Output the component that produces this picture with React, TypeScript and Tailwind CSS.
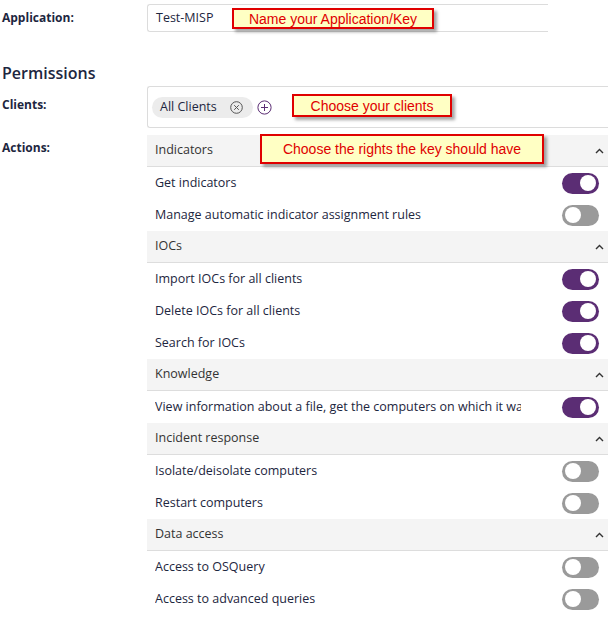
import React from 'react';

type Perm = { label: string; on: boolean };
type Group = { title: string; items: Perm[] };

const groups: Group[] = [
  {
    title: 'Indicators',
    items: [
      { label: 'Get indicators', on: true },
      { label: 'Manage automatic indicator assignment rules', on: false },
    ],
  },
  {
    title: 'IOCs',
    items: [
      { label: 'Import IOCs for all clients', on: true },
      { label: 'Delete IOCs for all clients', on: true },
      { label: 'Search for IOCs', on: true },
    ],
  },
  {
    title: 'Knowledge',
    items: [
      { label: 'View information about a file, get the computers on which it was seen', on: true },
    ],
  },
  {
    title: 'Incident response',
    items: [
      { label: 'Isolate/deisolate computers', on: false },
      { label: 'Restart computers', on: false },
    ],
  },
  {
    title: 'Data access',
    items: [
      { label: 'Access to OSQuery', on: false },
      { label: 'Access to advanced queries', on: false },
    ],
  },
];

const Callout: React.FC<{ children: React.ReactNode; className?: string }> = ({ children, className }) => (
  <div
    className={`absolute bg-[#ffffc4] border-2 border-[#e00000] text-[#e00000] text-[14px] leading-none flex items-center justify-center shadow-[3px_3px_3px_rgba(0,0,0,0.35)] ${className}`}
    style={{ fontFamily: '"Liberation Sans", Arial, sans-serif' }}
  >
    {children}
  </div>
);

const Toggle: React.FC<{ on: boolean }> = ({ on }) => (
  <div
    className={`w-[37px] h-[21px] rounded-full flex items-center px-[3px] ${
      on ? 'bg-[#5b2d74] justify-end' : 'bg-[#9a9a9a] justify-start'
    }`}
  >
    <div className="w-[16px] h-[16px] rounded-full bg-white" />
  </div>
);

const Chevron = () => (
  <svg width="9" height="6" viewBox="0 0 9 6" className="mr-[4px]">
    <path d="M1 5 L4.5 1.5 L8 5" fill="none" stroke="#333" strokeWidth="1.4" />
  </svg>
);

export default function App() {
  return (
    <div
      className="w-[608px] h-[622px] bg-white overflow-hidden text-[#1d2640] relative"
      style={{ fontFamily: '"Open Sans", "Noto Sans", sans-serif' }}
    >
      {/* Application */}
      <div className="flex items-center pt-[4px]">
        <div className="w-[147px] pl-[2px] text-[12px] font-bold">Application:</div>
        <div className="w-[401px] h-[28px] border border-r-0 border-[#dcdcdc] rounded-l-[3px] flex items-center pl-[8px] text-[12.5px]">
          Test-MISP
        </div>
      </div>
      <Callout className="left-[232px] top-[8px] w-[202px] h-[21px]">Name your Application/Key</Callout>

      {/* Permissions */}
      <div className="pl-[2px] mt-[31px] text-[16px] font-semibold leading-[20px]">Permissions</div>

      <div className="flex items-center mt-[3px]">
        <div className="w-[147px] pl-[2px] text-[12px] font-bold -mt-[4px]">Clients:</div>
        <div className="flex-1 h-[42px] border border-r-0 border-[#dcdcdc] rounded-l-[3px] flex items-center pl-[4px] gap-[4px]">
          <div className="h-[21px] rounded-full bg-[#ececec] flex items-center pl-[8px] pr-[10px] gap-[13px] text-[12.5px]">
            All Clients
            <svg width="13" height="13" viewBox="0 0 13 13">
              <circle cx="6.5" cy="6.5" r="5.8" fill="none" stroke="#555" strokeWidth="1" />
              <path d="M4.2 4.2 L8.8 8.8 M8.8 4.2 L4.2 8.8" stroke="#555" strokeWidth="1" />
            </svg>
          </div>
          <svg width="15" height="15" viewBox="0 0 15 15">
            <circle cx="7.5" cy="7.5" r="6.6" fill="none" stroke="#5b2d74" strokeWidth="1" />
            <path d="M7.5 4 L7.5 11 M4 7.5 L11 7.5" stroke="#5b2d74" strokeWidth="1" />
          </svg>
        </div>
      </div>
      <Callout className="left-[292px] top-[94px] w-[160px] h-[23px]">Choose your clients</Callout>

      {/* Actions */}
      <div className="flex mt-[7px]">
        <div className="w-[147px] pl-[2px] text-[12px] font-bold pt-[4px]">Actions:</div>
        <div className="flex-1">
          {groups.map((g) => (
            <div key={g.title}>
              <div className="h-[32px] bg-[#f4f4f4] border-b border-[#dddddd] flex items-center justify-between pl-[8px] text-[12.5px] text-[#333]">
                {g.title}
                <Chevron />
              </div>
              {g.items.map((it) => (
                <div key={it.label} className="h-[32px] flex items-center pl-[8px] text-[12.5px]">
                  <div className="w-[366px] whitespace-nowrap overflow-hidden">{it.label}</div>
                  <div className="ml-auto mr-[9px]">
                    <Toggle on={it.on} />
                  </div>
                </div>
              ))}
            </div>
          ))}
        </div>
      </div>
      <Callout className="left-[260px] top-[134px] w-[284px] h-[30px]">Choose the rights the key should have</Callout>
    </div>
  );
}
